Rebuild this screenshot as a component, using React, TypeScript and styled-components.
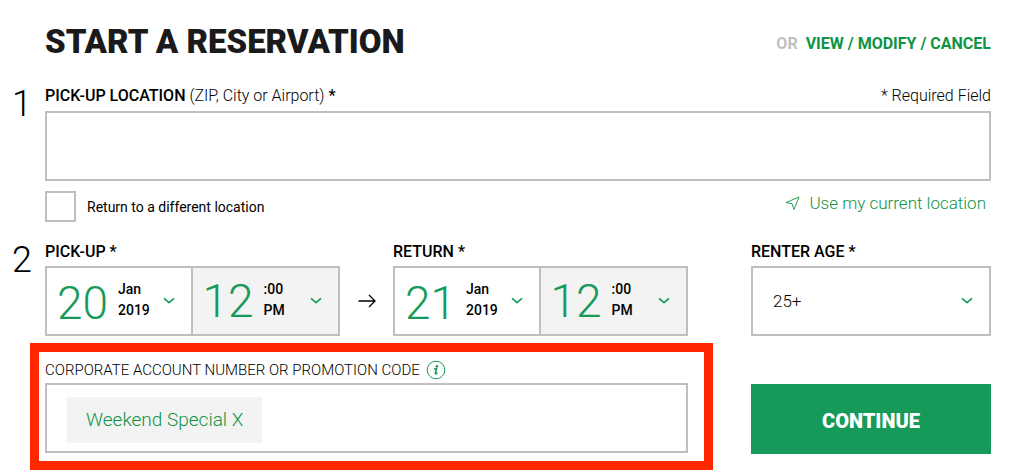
import React from "react";
import styled, { createGlobalStyle } from "styled-components";

const green = "#169a5a";
const linkGreen = "#0f9447";
const line = "#bfbfbf";
const shade = "#f3f3f3";

const GlobalStyle = createGlobalStyle`
  *, *::before, *::after { box-sizing: border-box; }
  body {
    margin: 0;
    background: #fff;
    color: #000;
    font-family: Roboto, "Liberation Sans", sans-serif;
    font-size: 16px;
    line-height: 20px;
  }
  button, input, select { font: inherit; color: inherit; border-radius: 0; }
  button { cursor: pointer; }
`;

const Page = styled.main`
  padding: 20px 33px 5px 0;
`;

const Header = styled.header`
  display: flex;
  align-items: center;
  justify-content: space-between;
  padding-left: 45px;
  height: 44px;
`;

const Title = styled.h1`
  margin: 0;
  color: #1a1a1a;
  font-size: 33px;
  line-height: 44px;
  font-weight: 900;
`;

const HeaderNote = styled.p`
  display: flex;
  gap: 8px;
  margin: 0;
  padding-top: 4px;
  color: #bfbfbf;
  font-weight: 700;
`;

const HeaderLink = styled.a`
  color: ${linkGreen};
  text-decoration: none;
`;

const Step = styled.section<{ $top: number }>`
  display: grid;
  grid-template-columns: 45px minmax(0, 1fr);
  padding-top: ${(p) => p.$top}px;
`;

const StepNumber = styled.span`
  padding-left: 12px;
  font-size: 36px;
  line-height: 36px;
  font-weight: 300;
`;

const LabelRow = styled.div`
  display: flex;
  align-items: flex-start;
  justify-content: space-between;
  height: 25px;
  font-weight: 300;
`;

const Label = styled.label`
  font-weight: 300;
  b { font-weight: 500; }
`;

const GroupTitle = styled.div`
  display: block;
  height: 24px;
  font-weight: 500;
`;

const LocationInput = styled.input`
  display: block;
  width: 100%;
  height: 70px;
  padding: 0 20px;
  border: 2px solid ${line};
  background: #fff;
`;

const OptionRow = styled.div`
  display: flex;
  align-items: flex-start;
  justify-content: space-between;
  padding: 10px 5px 0 0;
`;

const CheckLabel = styled.label`
  display: flex;
  align-items: center;
  gap: 11px;
  font-size: 14px;
`;

const Checkbox = styled.input`
  appearance: none;
  width: 31px;
  height: 31px;
  margin: 0;
  border: 2px solid ${line};
  background: #fff;
  &:checked { background: ${green}; }
`;

const LocateButton = styled.button`
  display: flex;
  align-items: center;
  gap: 9px;
  padding: 2px 0;
  border: 0;
  background: none;
  color: ${linkGreen};
  font-size: 17px;
  font-weight: 300;
`;

const Booking = styled.div`
  display: grid;
  grid-template-columns: minmax(0, 1fr) 240px;
  column-gap: 63px;
  row-gap: 7px;
`;

const DateRange = styled.div`
  display: grid;
  grid-template-columns: minmax(0, 1fr) 53px minmax(0, 1fr);
`;

const ArrowCell = styled.div`
  display: grid;
  place-items: center;
  padding-top: 24px;
`;

const Pair = styled.div`
  display: grid;
  grid-template-columns: 36fr 37fr;
  height: 70px;
  border: 2px solid ${line};
`;

const Picker = styled.button<{ $shaded?: boolean }>`
  display: flex;
  align-items: center;
  min-width: 0;
  padding: 0 16px 0 10px;
  border: 0;
  border-left: ${(p) => (p.$shaded ? `2px solid ${line}` : "0")};
  background: ${(p) => (p.$shaded ? shade : "#fff")};
  text-align: left;
`;

const BigDigits = styled.span<{ $raised?: boolean }>`
  width: 61px;
  padding-top: ${(p) => (p.$raised ? 0 : 4)}px;
  color: ${green};
  font-size: 46px;
  line-height: 48px;
  font-weight: 300;
`;

const SmallLines = styled.span`
  display: flex;
  flex: 1;
  flex-direction: column;
  padding-bottom: 2px;
  font-size: 14px;
  line-height: 21px;
  font-weight: 500;
`;

const Chevron = () => (
  <svg width="12" height="8" viewBox="0 0 12 8" fill="none" stroke={green} strokeWidth="1.7" aria-hidden="true">
    <path d="M1 1.4 L6 5.6 L11 1.4" strokeLinejoin="round" />
  </svg>
);

const AgeBox = styled.div`
  display: grid;
  grid-template-columns: minmax(0, 1fr) 28px;
  align-items: center;
  height: 70px;
  border: 2px solid ${line};
  svg { grid-area: 1 / 2; pointer-events: none; z-index: 1; }
`;

const AgeSelect = styled.select`
  grid-area: 1 / 1 / 2 / 3;
  appearance: none;
  width: 100%;
  height: 66px;
  padding: 0 20px;
  border: 0;
  background: transparent;
  font-size: 17px;
  font-weight: 300;
`;

const PromoFrame = styled.div`
  margin: 0 -25px 0 -15px;
  padding: 6px 16px 8px 6px;
  border: 9px solid #ff2600;
`;

const PromoLabel = styled(LabelRow)`
  align-items: center;
  justify-content: flex-start;
  gap: 6px;
  height: 24px;
  font-size: 15px;
`;

const InfoButton = styled.button`
  display: flex;
  padding: 0;
  border: 0;
  background: none;
`;

const PromoBox = styled.div`
  display: flex;
  align-items: center;
  gap: 12px;
  height: 70px;
  margin-top: 1px;
  padding: 4px 20px 0;
  border: 2px solid ${line};
`;

const Chip = styled.button`
  height: 46px;
  padding: 0 19px;
  border: 0;
  background: ${shade};
  color: ${linkGreen};
  font-size: 19px;
  font-weight: 300;
  white-space: nowrap;
`;

const PromoInput = styled.input`
  flex: 1;
  min-width: 0;
  height: 46px;
  border: 0;
  background: transparent;
  outline: none;
`;

const ContinueButton = styled.button`
  align-self: end;
  height: 70px;
  margin-bottom: 16px;
  padding: 4px 20px 0;
  border: 0;
  background: ${green};
  color: #fff;
  font-size: 20px;
  font-weight: 900;
`;

function DateTime({ title, day, month, year }: { title: string; day: string; month: string; year: string }) {
  return (
    <div role="group" aria-label={title}>
      <GroupTitle>{title} *</GroupTitle>
      <Pair>
        <Picker type="button" aria-haspopup="dialog">
          <BigDigits>{day}</BigDigits>
          <SmallLines>
            <span>{month}</span>
            <span>{year}</span>
          </SmallLines>
          <Chevron />
        </Picker>
        <Picker type="button" aria-haspopup="listbox" $shaded>
          <BigDigits $raised>12</BigDigits>
          <SmallLines>
            <span>:00</span>
            <span>PM</span>
          </SmallLines>
          <Chevron />
        </Picker>
      </Pair>
    </div>
  );
}

export default function App() {
  return (
    <>
      <GlobalStyle />
      <Page>
        <Header>
          <Title>START A RESERVATION</Title>
          <HeaderNote>
            <span>OR</span>
            <HeaderLink href="#reservations">VIEW / MODIFY / CANCEL</HeaderLink>
          </HeaderNote>
        </Header>

        <Step $top={22}>
          <StepNumber>1</StepNumber>
          <div>
            <LabelRow>
              <Label htmlFor="location">
                <b>PICK-UP LOCATION</b> (ZIP, City or Airport) <b>*</b>
              </Label>
              <span>* Required Field</span>
            </LabelRow>
            <LocationInput id="location" type="text" required />
            <OptionRow>
              <CheckLabel>
                <Checkbox type="checkbox" />
                Return to a different location
              </CheckLabel>
              <LocateButton type="button">
                <svg width="15" height="15" viewBox="0 0 15 15" fill="none" stroke={linkGreen} strokeWidth="0.9" aria-hidden="true">
                  <path d="M14 1 L1 6.6 L7 7.6 L9 13.6 Z" strokeLinejoin="round" />
                </svg>
                Use my current location
              </LocateButton>
            </OptionRow>
          </div>
        </Step>

        <Step $top={20}>
          <StepNumber>2</StepNumber>
          <Booking>
            <DateRange>
              <DateTime title="PICK-UP" day="20" month="Jan" year="2019" />
              <ArrowCell>
                <svg width="18" height="14" viewBox="0 0 18 14" fill="none" stroke="#000" strokeWidth="1.3" aria-hidden="true">
                  <path d="M0.5 7 H17 M11 1 L17 7 L11 13" />
                </svg>
              </ArrowCell>
              <DateTime title="RETURN" day="21" month="Jan" year="2019" />
            </DateRange>
            <div>
              <GroupTitle as="label" htmlFor="age">RENTER AGE *</GroupTitle>
              <AgeBox>
                <AgeSelect id="age" defaultValue="25+">
                  <option>25+</option>
                  <option>21-24</option>
                </AgeSelect>
                <Chevron />
              </AgeBox>
            </div>
            <PromoFrame>
              <PromoLabel>
                <Label htmlFor="promo">CORPORATE ACCOUNT NUMBER OR PROMOTION CODE</Label>
                <InfoButton type="button" aria-label="About promotion codes">
                  <svg width="20" height="20" viewBox="0 0 20 20" fill="none" aria-hidden="true">
                    <circle cx="10" cy="10" r="8.8" stroke={green} strokeWidth="1" />
                    <circle cx="10.9" cy="6.2" r="1.2" fill={green} />
                    <path d="M8 8.9 L10.6 8.5 L9.3 13.2 Q9.2 14.6 11.4 12.8" stroke={green} strokeWidth="1.5" />
                  </svg>
                </InfoButton>
              </PromoLabel>
              <PromoBox>
                <Chip type="button">Weekend Special X</Chip>
                <PromoInput id="promo" type="text" />
              </PromoBox>
            </PromoFrame>
            <ContinueButton type="submit">CONTINUE</ContinueButton>
          </Booking>
        </Step>
      </Page>
    </>
  );
}
